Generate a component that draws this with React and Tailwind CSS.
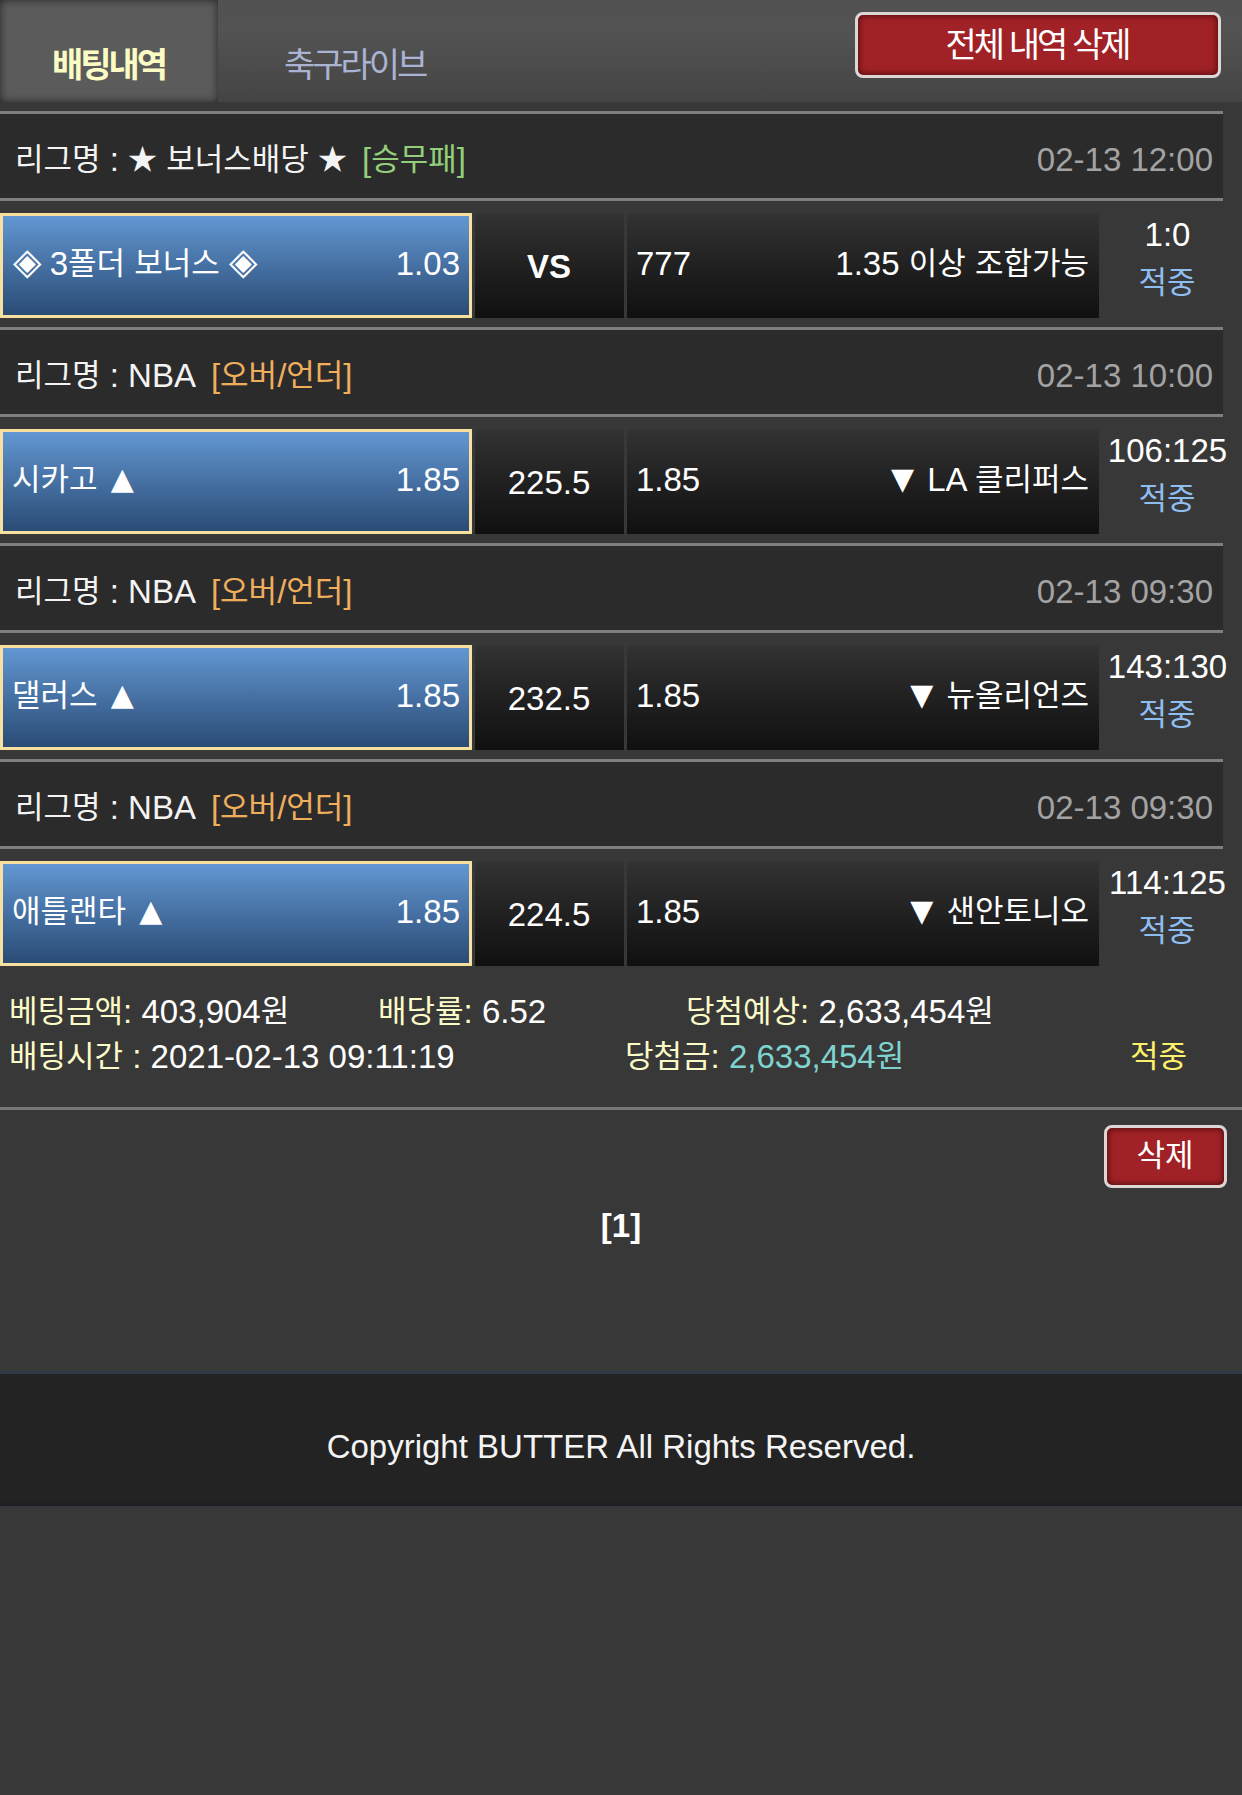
import React from 'react';
import clsx from 'clsx';

const games = [
  {
    league: '★ 보너스배당 ★',
    type: '[승무패]',
    typeColor: 'text-[#93cf7b]',
    date: '02-13 12:00',
    home: '◈ 3폴더 보너스 ◈',
    homeOdds: '1.03',
    line: 'VS',
    awayOdds: '777',
    away: '1.35 이상 조합가능',
    score: '1:0',
  },
  {
    league: 'NBA',
    type: '[오버/언더]',
    typeColor: 'text-[#efae5c]',
    date: '02-13 10:00',
    home: '시카고 ▲',
    homeOdds: '1.85',
    line: '225.5',
    awayOdds: '1.85',
    away: '▼ LA 클리퍼스',
    score: '106:125',
  },
  {
    league: 'NBA',
    type: '[오버/언더]',
    typeColor: 'text-[#efae5c]',
    date: '02-13 09:30',
    home: '댈러스 ▲',
    homeOdds: '1.85',
    line: '232.5',
    awayOdds: '1.85',
    away: '▼ 뉴올리언즈',
    score: '143:130',
  },
  {
    league: 'NBA',
    type: '[오버/언더]',
    typeColor: 'text-[#efae5c]',
    date: '02-13 09:30',
    home: '애틀랜타 ▲',
    homeOdds: '1.85',
    line: '224.5',
    awayOdds: '1.85',
    away: '▼ 샌안토니오',
    score: '114:125',
  },
];

// Hangul and symbols are sized on their own next to the latin text
const runs = [
  [/[가-힣]/, "text-[31px] leading-[0] align-[1px] font-['Noto_Sans_CJK_KR',sans-serif]"],
  [/★/, "text-[29px] leading-[0] align-[1px] font-['Noto_Sans_CJK_KR',sans-serif]"],
  [/◈/, "text-[37px] leading-[0] align-[1px] ml-[0.5px] font-['Noto_Sans_CJK_KR',sans-serif]"],
  [/[▲▼]/, "text-[30px] leading-[0] align-[2px] mx-[4px] font-['DejaVu_Sans',sans-serif]"],
];

function Text({ children }) {
  return children.split(/([가-힣]+|[★◈▲▼])/).map((part, i) => {
    const run = runs.find(([pattern]) => pattern.test(part));
    return run ? (
      <span key={i} className={run[1]}>
        {part}
      </span>
    ) : (
      part
    );
  });
}

function Header() {
  return (
    <div className="flex h-[102px] bg-linear-to-b from-[#515151] via-[#535353] via-30% to-[#444444] font-['Noto_Sans_CJK_KR',sans-serif] text-[34px] tracking-[-3px]">
      <div className="w-[218px] pt-[41px] pr-px text-center leading-[44px] font-bold text-[#fbfbc4] bg-[#5b5b5b] shadow-[inset_0_0_9px_rgba(0,0,0,0.6)]">
        배팅내역
      </div>
      <div className="pt-[41px] pl-[66px] leading-[44px] text-[#aab4d2]">축구라이브</div>
      <button className="ml-auto mt-3 mr-[21px] w-[366px] h-[66px] pb-[5px] pr-[2px] rounded-lg border-3 border-[#dcd6d6] bg-[#a02226] text-white leading-[44px] [word-spacing:2px] shadow-[inset_0_0_7px_rgba(40,0,0,0.8)]">
        전체 내역 삭제
      </button>
    </div>
  );
}

function Game({ game }) {
  return (
    <div className="mt-[9px] whitespace-nowrap">
      <div className="flex justify-between w-[1223px] h-[90px] pt-[26px] pl-[15px] pr-[10px] border-y-3 border-[#808080] bg-[#2b2b2b]">
        <div className="text-[#f4f4f4]">
          <Text>{`리그명 : ${game.league}`}</Text>
          <span className={clsx('ml-[15px]', game.typeColor)}>
            <Text>{game.type}</Text>
          </span>
        </div>
        <div className="text-[#a3a3a3]">{game.date}</div>
      </div>

      <div className="flex mt-3 h-[105px]">
        <div className="flex justify-between w-[472px] mr-[3px] pt-[28px] px-[9px] border-3 border-[#f8e1a0] bg-linear-to-b from-[#6397d3] to-[#2a4c75]">
          <div>
            <Text>{game.home}</Text>
          </div>
          <div>{game.homeOdds}</div>
        </div>
        <div
          className={clsx(
            'w-[149px] mr-[3px] pt-[34px] pr-px text-center bg-linear-to-b from-[#333333] to-[#101010]',
            game.line === 'VS' && 'font-bold'
          )}
        >
          {game.line}
        </div>
        <div className="flex justify-between w-[472px] pt-[31px] pl-[9px] pr-[10px] bg-linear-to-b from-[#333333] to-[#101010]">
          <div>{game.awayOdds}</div>
          <div>
            <Text>{game.away}</Text>
          </div>
        </div>
        <div className="w-[137px] pt-[2px] text-center">
          <div>{game.score}</div>
          <div className="mt-[8px] pr-px text-[#8fbdf0]">
            <Text>적중</Text>
          </div>
        </div>
      </div>
    </div>
  );
}

function Field({ label, value, className, valueColor }) {
  return (
    <div className={className}>
      <span className="text-[#fbfbc8]">
        <Text>{label}</Text>
      </span>{' '}
      <span className={valueColor}>
        <Text>{value}</Text>
      </span>
    </div>
  );
}

function Summary() {
  return (
    <div className="h-[144px] pt-[23px] pl-[9px] border-b-3 border-[#777777] leading-[45px] whitespace-nowrap">
      <div className="flex">
        <Field className="w-[369px]" label="베팅금액:" value="403,904원" />
        <Field className="w-[308px]" label="배당률:" value="6.52" />
        <Field label="당첨예상:" value="2,633,454원" />
      </div>
      <div className="flex">
        <Field className="w-[616px]" label="배팅시간 :" value="2021-02-13 09:11:19" />
        <Field className="w-[505px]" label="당첨금:" value="2,633,454원" valueColor="text-[#7fd3cf]" />
        <div className="text-[#fdf06a]">
          <Text>적중</Text>
        </div>
      </div>
    </div>
  );
}

export default function App() {
  return (
    <div className="w-[1242px] h-[1795px] overflow-hidden bg-[#383838] text-white text-[33px] leading-[40px] font-['Liberation_Sans','Noto_Sans_CJK_KR',sans-serif]">
      <Header />
      {games.map((game, i) => (
        <Game key={i} game={game} />
      ))}
      <Summary />

      <div className="flex justify-end mt-[15px] pr-[15px]">
        <button className="w-[123px] h-[63px] pb-[2px] pr-px rounded-lg border-3 border-[#dcd6d6] bg-[#a02226] shadow-[inset_0_0_7px_rgba(40,0,0,0.8)]">
          <Text>삭제</Text>
        </button>
      </div>
      <div className="mt-[18px] text-center font-bold">[1]</div>

      <div className="mt-[125px] h-[135px] pt-[53px] border-t-3 border-b-3 border-t-[#2f3a48] border-b-[#1e2028] bg-[#232323] text-center text-[#f4f4f4]">
        Copyright BUTTER All Rights Reserved.
      </div>
    </div>
  );
}
